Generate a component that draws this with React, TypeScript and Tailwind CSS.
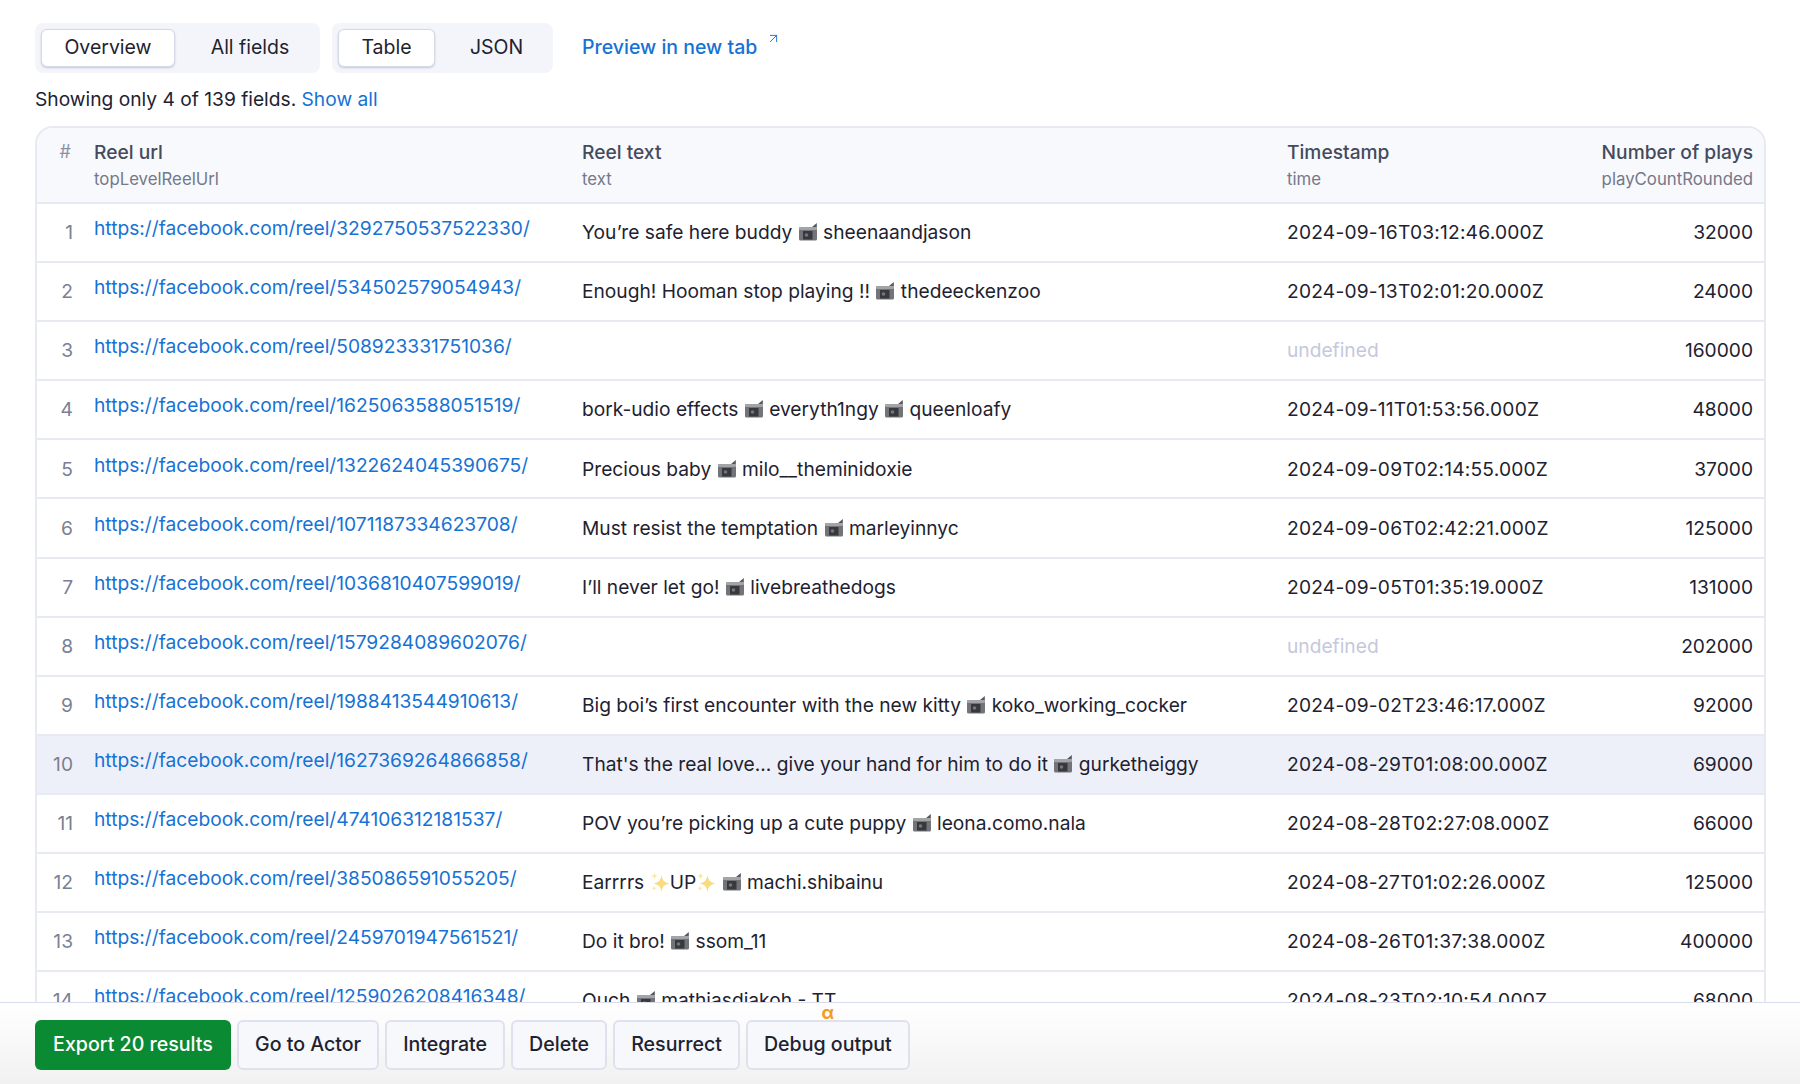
import { ArrowUpRight } from 'lucide-react';

interface Row {
  id: number;
  url: string;
  text: string[];
  time?: string;
  plays: number;
}

const rows: Row[] = [
  { id: 1, url: '3292750537522330', text: ['You’re safe here buddy ', '@cam', ' sheenaandjason'], time: '2024-09-16T03:12:46.000Z', plays: 32000 },
  { id: 2, url: '534502579054943', text: ['Enough! Hooman stop playing !! ', '@cam', ' thedeeckenzoo'], time: '2024-09-13T02:01:20.000Z', plays: 24000 },
  { id: 3, url: '508923331751036', text: [], plays: 160000 },
  { id: 4, url: '1625063588051519', text: ['bork-udio effects ', '@cam', ' everyth1ngy ', '@cam', ' queenloafy'], time: '2024-09-11T01:53:56.000Z', plays: 48000 },
  { id: 5, url: '1322624045390675', text: ['Precious baby ', '@cam', ' milo__theminidoxie'], time: '2024-09-09T02:14:55.000Z', plays: 37000 },
  { id: 6, url: '1071187334623708', text: ['Must resist the temptation ', '@cam', ' marleyinnyc'], time: '2024-09-06T02:42:21.000Z', plays: 125000 },
  { id: 7, url: '1036810407599019', text: ['I’ll never let go! ', '@cam', ' livebreathedogs'], time: '2024-09-05T01:35:19.000Z', plays: 131000 },
  { id: 8, url: '1579284089602076', text: [], plays: 202000 },
  { id: 9, url: '1988413544910613', text: ['Big boi’s first encounter with the new kitty ', '@cam', ' koko_working_cocker'], time: '2024-09-02T23:46:17.000Z', plays: 92000 },
  { id: 10, url: '1627369264866858', text: ["That's the real love... give your hand for him to do it ", '@cam', ' gurketheiggy'], time: '2024-08-29T01:08:00.000Z', plays: 69000 },
  { id: 11, url: '474106312181537', text: ['POV you’re picking up a cute puppy ', '@cam', ' leona.como.nala'], time: '2024-08-28T02:27:08.000Z', plays: 66000 },
  { id: 12, url: '385086591055205', text: ['Earrrrs ', '@spark', 'UP', '@spark', ' ', '@cam', ' machi.shibainu'], time: '2024-08-27T01:02:26.000Z', plays: 125000 },
  { id: 13, url: '2459701947561521', text: ['Do it bro! ', '@cam', ' ssom_11'], time: '2024-08-26T01:37:38.000Z', plays: 400000 },
  { id: 14, url: '1259026208416348', text: ['Ouch ', '@cam', ' mathiasdiakoh - TT'], time: '2024-08-23T02:10:54.000Z', plays: 68000 },
];

function CameraIcon() {
  return (
    <svg viewBox="0 0 20 20" className="inline-block h-[20px] w-[20px] align-[-3px]">
      <path d="M13.500 5.500 18.800 1v4.500z" fill="#55575c" />
      <rect x="1" y="5" width="18" height="13.500" rx="1.500" fill="#727479" />
      <rect x="1" y="5" width="18" height="3" rx="1" fill="#a2a4a8" />
      <rect x="5" y="9" width="9.500" height="8.500" fill="#37393d" />
      <circle cx="8.500" cy="13" r="1.800" fill="#75777c" />
    </svg>
  );
}

function SparkleIcon() {
  return (
    <svg viewBox="0 0 20 20" className="inline-block h-[21px] w-[20px] align-[-4px]">
      <path d="M11.500 2.500c1 5.700 2.800 7.500 8 8.500-5.200 1-7 2.800-8 8.500-1-5.700-2.800-7.500-8-8.500 5.200-1 7-2.800 8-8.500z" fill="#f9dc7c" />
      <path d="M4.500 0c.4 2.400 1.100 3.100 3.300 3.500-2.200.4-2.900 1.100-3.300 3.500-.4-2.400-1.100-3.100-3.300-3.500C3.400 3.100 4.100 2.400 4.500 0z" fill="#fbe7a4" />
      <path d="M4 13c.4 1.800.9 2.400 2.600 2.700-1.700.3-2.200.9-2.600 2.700-.4-1.800-.9-2.400-2.600-2.700 1.700-.3 2.200-.9 2.600-2.700z" fill="#fbe7a4" />
    </svg>
  );
}

function ReelText({ parts }: { parts: string[] }) {
  return (
    <>
      {parts.map((part, index) => {
        if (part === '@cam') return <CameraIcon key={index} />;
        if (part === '@spark') return <SparkleIcon key={index} />;
        return <span key={index}>{part}</span>;
      })}
    </>
  );
}

const actions = ['Go to Actor', 'Integrate', 'Delete', 'Resurrect', 'Debug output'];

export default function App() {
  return (
    <div className="flex h-screen flex-col overflow-hidden bg-white font-['Inter',sans-serif] text-[19.2px] text-[#1e2230]">
      <div className="flex-1 overflow-hidden pl-[35px] pr-[34px] pt-[23px]">
        <div className="flex items-center gap-3 text-[19.5px]">
          <div className="flex h-[50px] w-[285px] items-center rounded-lg bg-[#f4f5fa] px-[6px]">
            <div className="flex h-[38px] w-[134px] items-center justify-center rounded-md border border-[#d5d8e8] bg-white shadow-[0_1px_2px_rgba(90,95,140,0.3)]">Overview</div>
            <div className="flex h-[38px] flex-1 items-center justify-center pl-[11px]">All fields</div>
          </div>
          <div className="flex h-[50px] w-[221px] items-center rounded-lg bg-[#f4f5fa] px-[6px]">
            <div className="flex h-[38px] w-[97px] items-center justify-center rounded-md border border-[#d5d8e8] bg-white shadow-[0_1px_2px_rgba(90,95,140,0.3)]">Table</div>
            <div className="flex h-[38px] flex-1 items-center justify-center pl-[11px]">JSON</div>
          </div>
          <div className="ml-[17px] flex items-start font-medium text-[#1672d4]">
            Preview in new tab
            <ArrowUpRight className="ml-[9px] mt-[-2px] h-[15px] w-[15px]" strokeWidth={1.5} />
          </div>
        </div>
        <p className="mt-[13px] leading-[26px]">
          Showing only 4 of 139 fields. <span className="text-[#1672d4]">Show all</span>
        </p>
        <div className="mt-[14px] overflow-hidden rounded-t-[18px] border-x-2 border-t-2 border-[#e7e9f3]">
          <table className="w-full table-fixed border-collapse">
            <colgroup>
              <col className="w-[45px]" />
              <col className="w-[488px]" />
              <col className="w-[705px]" />
              <col className="w-[314px]" />
              <col />
            </colgroup>
            <thead>
              <tr className="h-[75px] border-b-2 border-[#e7e9f3] bg-[#f8f9fc] align-top whitespace-nowrap">
                <th className="pr-[11px] pt-[10px] text-right text-[18px] font-normal text-[#8d91a5]">#</th>
                <th className="px-3 pt-[10px] text-left font-medium text-[#454a5c]">
                  Reel url
                  <div className="text-[16.8px] font-normal text-[#74788a]">topLevelReelUrl</div>
                </th>
                <th className="px-3 pt-[10px] text-left font-medium text-[#454a5c]">
                  Reel text
                  <div className="text-[16.8px] font-normal text-[#74788a]">text</div>
                </th>
                <th className="px-3 pt-[10px] text-left font-medium text-[#454a5c]">
                  Timestamp
                  <div className="text-[16.8px] font-normal text-[#74788a]">time</div>
                </th>
                <th className="pl-0 pr-[11px] pt-[10px] text-right font-medium text-[#454a5c]">
                  Number of plays
                  <div className="text-[16.8px] font-normal text-[#74788a]">playCountRounded</div>
                </th>
              </tr>
            </thead>
            <tbody>
              {rows.map(row => (
                <tr key={row.id} className={`h-[59.1px] border-b-2 border-[#e7e9f3] ${row.id === 10 ? 'bg-[#eef0f9]' : 'bg-white'}`}>
                  <td className="pr-[9px] text-right text-[#7b7f93]">{row.id}</td>
                  <td className="px-3 pb-[8px] text-[#1672d4]">https://facebook.com/reel/{row.url}/</td>
                  <td className="px-3 whitespace-nowrap">
                    <ReelText parts={row.text} />
                  </td>
                  <td className={`px-3 ${row.time ? 'tracking-[0.2px]' : 'text-[#c5c8dc]'}`}>{row.time ?? 'undefined'}</td>
                  <td className="pl-0 pr-[11px] text-right">{row.plays}</td>
                </tr>
              ))}
            </tbody>
          </table>
        </div>
      </div>
      <div className="flex h-[82px] shrink-0 gap-[6px] border-t border-[#d9dcea] bg-gradient-to-b from-white to-[#f1f1f1] pl-[35px] pt-[17px] text-[19.6px]">
        <div className="flex h-[50px] w-[196px] items-center justify-center rounded-md bg-[#0b8a34] font-medium text-white">Export 20 results</div>
        {actions.map(action => (
          <div key={action} className="relative flex h-[50px] items-center justify-center rounded-md border-2 border-[#dfe1ee] bg-[#f7f8fc] px-[16px] font-medium">
            {action}
            {action === 'Debug output' && (
              <span className="absolute left-1/2 top-[-18px] -translate-x-1/2 text-[18px] font-bold leading-none text-[#f59a23]">α</span>
            )}
          </div>
        ))}
      </div>
    </div>
  );
}
